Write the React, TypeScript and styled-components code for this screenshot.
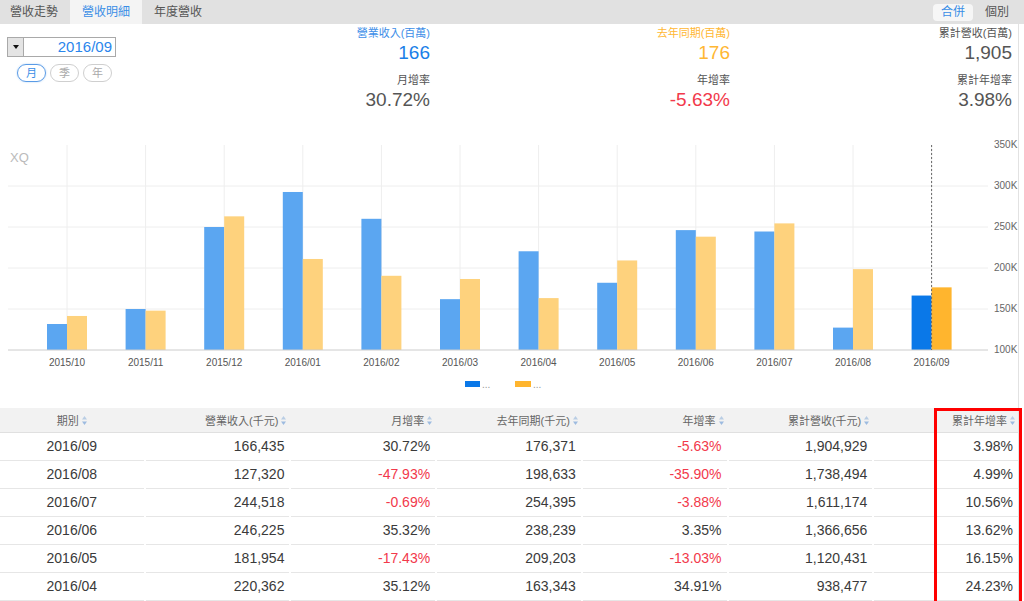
import React from 'react'
import styled, { createGlobalStyle } from 'styled-components'

const GlobalStyle = createGlobalStyle`
    html, body {
        margin: 0;
        padding: 0;
        background: #fff;
    }
    body {
        font-family: "Liberation Sans", Arial, "Noto Sans CJK TC", sans-serif;
        color: #333;
    }
`

const BLUE = '#1a7fe8'
const ORANGE = '#ffb733'
const RED = '#f2394b'

const Page = styled.div`
    width: 1024px;
    height: 601px;
    overflow: hidden;
`

const TabBar = styled.div`
    display: flex;
    justify-content: space-between;
    height: 24px;
    background: #e1e1e1;
`
const Tabs = styled.div`
    display: flex;
    margin-left: -2px;
`
const Tab = styled.div<{ $active?: boolean }>`
    padding: 0 12px;
    line-height: 24px;
    font-size: 12px;
    color: ${p => (p.$active ? '#3a8ee6' : '#555')};
    background: ${p => (p.$active ? '#f4f4f4' : 'transparent')};
`
const Scope = styled.div`
    display: flex;
    align-items: center;
    gap: 4px;
    padding-right: 7px;
`
const ScopeBtn = styled.div<{ $active?: boolean }>`
    font-size: 12px;
    line-height: 17px;
    padding: 0 8px;
    border-radius: 4px;
    background: ${p => (p.$active ? '#f6f6f6' : 'transparent')};
    color: ${p => (p.$active ? '#3a8ee6' : '#555')};
`

const Content = styled.div`
    width: 1019px;
    border-right: 1px solid #e2e2e2;
    box-sizing: border-box;
`

const Header = styled.div`
    display: grid;
    grid-template-columns: 130px 300px 300px 1fr;
    height: 96px;
    padding-right: 6px;
`
const PickerCol = styled.div`
    padding: 13px 0 0 7px;
`
const DateBox = styled.div`
    display: flex;
    width: 109px;
    height: 20px;
    border: 1px solid #a9a9a9;
    box-sizing: border-box;
`
const DropBtn = styled.div`
    width: 15px;
    background: #e4e4e4;
    border-right: 1px solid #a9a9a9;
    display: flex;
    align-items: center;
    justify-content: center;

    &::after {
        content: '';
        border-top: 4px solid #111;
        border-left: 3px solid transparent;
        border-right: 3px solid transparent;
    }
`
const DateText = styled.div`
    flex: 1;
    text-align: right;
    font-size: 15px;
    line-height: 18px;
    color: #2a86ec;
    padding-right: 3px;
`
const PeriodRow = styled.div`
    display: flex;
    gap: 4px;
    margin: 7px 0 0 10px;
`
const PeriodBtn = styled.div<{ $active?: boolean }>`
    width: 29px;
    height: 18px;
    box-sizing: border-box;
    border: 1px solid ${p => (p.$active ? '#5a9be6' : '#cfcfcf')};
    border-radius: 9px;
    font-size: 11px;
    line-height: 16px;
    text-align: center;
    color: ${p => (p.$active ? '#3a8ee6' : '#aaa')};
    box-shadow: ${p => (p.$active ? '0 0 2px rgba(58,142,230,0.4)' : 'none')};
`
const StatCol = styled.div`
    text-align: right;
    padding-top: 2px;
`
const StatLabel = styled.div<{ $color?: string; $gap?: boolean }>`
    font-size: 11px;
    line-height: 14px;
    color: ${p => p.$color || '#555'};
    margin-top: ${p => (p.$gap ? '7px' : '0')};
`
const StatValue = styled.div<{ $color?: string }>`
    font-size: 19px;
    line-height: 26px;
    color: ${p => p.$color || '#555'};
`

const ChartWrap = styled.div`
    height: 280px;
    svg {
        display: block;
    }
`

const TableWrap = styled.div`
    position: relative;
    margin-top: 8px;
`
const HeadRow = styled.div`
    display: grid;
    grid-template-columns: repeat(7, 1fr);
    column-gap: 2px;
    height: 25px;
    background: #f2f2f2;
    border-bottom: 1px solid #e0e0e0;
    box-sizing: border-box;
`
const HeadCell = styled.div<{ $center?: boolean }>`
    display: flex;
    align-items: center;
    justify-content: ${p => (p.$center ? 'center' : 'flex-end')};
    gap: 3px;
    padding-right: ${p => (p.$center ? '0' : '3px')};
    font-size: 11px;
    color: #666;
`
const Row = styled.div`
    display: grid;
    grid-template-columns: repeat(7, 1fr);
    column-gap: 2px;
    height: 28px;
`
const Cell = styled.div<{ $center?: boolean; $neg?: boolean }>`
    border-bottom: 1px solid #e6e6e6;
    text-align: ${p => (p.$center ? 'center' : 'right')};
    padding-right: ${p => (p.$center ? '0' : '5px')};
    font-size: 14px;
    line-height: 27px;
    color: ${p => (p.$neg ? RED : '#3a3a3a')};
`
const Highlight = styled.div`
    position: absolute;
    left: 934px;
    top: 0;
    width: 88px;
    height: 200px;
    border: 3px solid #f00;
    box-sizing: border-box;
    pointer-events: none;
`

const SortIcon = () => (
    <svg width="5" height="9" viewBox="0 0 5 9">
        <path d="M2.5 0 L5 3.5 L0 3.5 Z" fill="#b9cde4" />
        <path d="M2.5 9 L5 5.5 L0 5.5 Z" fill="#9dbbe0" />
    </svg>
)

const months = [
    { m: '2015/10', a: 131.7, b: 141.5 },
    { m: '2015/11', a: 150, b: 148 },
    { m: '2015/12', a: 250, b: 263 },
    { m: '2016/01', a: 292.7, b: 211 },
    { m: '2016/02', a: 260, b: 190.5 },
    { m: '2016/03', a: 162, b: 186.6 },
    { m: '2016/04', a: 220.4, b: 163.3 },
    { m: '2016/05', a: 182, b: 209.2 },
    { m: '2016/06', a: 246.2, b: 238.2 },
    { m: '2016/07', a: 244.5, b: 254.4 },
    { m: '2016/08', a: 127.3, b: 198.6 },
    { m: '2016/09', a: 166.4, b: 176.4 },
]

const yOf = (v: number) => 350 - (v - 100) * 0.82
const xOf = (i: number) => 67 + i * 78.6

const Chart = () => (
    <svg width="1019" height="280" viewBox="0 120 1019 280">
        {[186, 227, 268, 309].map(y => (
            <line key={y} x1="8" x2="988" y1={y} y2={y} stroke="#eeeeee" />
        ))}
        {months.map((d, i) => (
            <line key={d.m} x1={xOf(i)} x2={xOf(i)} y1="145" y2="350" stroke="#eeeeee" />
        ))}
        <text x="10" y="162" fontSize="13" fill="#bbb">XQ</text>
        {months.map((d, i) => {
            const last = i === months.length - 1
            const x = xOf(i)
            return (
                <g key={d.m}>
                    <rect x={x - 20} y={yOf(d.a)} width="20" height={350 - yOf(d.a)} fill={last ? '#0a78e8' : '#5ba6f1'} />
                    <rect x={x} y={yOf(d.b)} width="20" height={350 - yOf(d.b)} fill={last ? '#ffb52e' : '#fed27d'} />
                    <text x={x} y="366" fontSize="10" fill="#555" textAnchor="middle">{d.m}</text>
                </g>
            )
        })}
        <line x1="8" x2="988" y1="350" y2="350" stroke="#cccccc" />
        <line x1={xOf(11)} x2={xOf(11)} y1="145" y2="350" stroke="#666" strokeDasharray="2,2" />
        {['350K', '300K', '250K', '200K', '150K', '100K'].map((t, i) => (
            <text key={t} x="994" y={148 + i * 41} fontSize="10" fill="#666">{t}</text>
        ))}
        <rect x="465" y="381" width="15" height="6" fill="#0a78e8" />
        <text x="482" y="388" fontSize="10" fill="#999">...</text>
        <rect x="515" y="381" width="16" height="6" fill="#ffb52e" />
        <text x="533" y="388" fontSize="10" fill="#999">...</text>
    </svg>
)

const heads = ['期別', '營業收入(千元)', '月增率', '去年同期(千元)', '年增率', '累計營收(千元)', '累計年增率']

const rows = [
    ['2016/09', '166,435', '30.72%', '176,371', '-5.63%', '1,904,929', '3.98%'],
    ['2016/08', '127,320', '-47.93%', '198,633', '-35.90%', '1,738,494', '4.99%'],
    ['2016/07', '244,518', '-0.69%', '254,395', '-3.88%', '1,611,174', '10.56%'],
    ['2016/06', '246,225', '35.32%', '238,239', '3.35%', '1,366,656', '13.62%'],
    ['2016/05', '181,954', '-17.43%', '209,203', '-13.03%', '1,120,431', '16.15%'],
    ['2016/04', '220,362', '35.12%', '163,343', '34.91%', '938,477', '24.23%'],
]

const App: React.FC = () => (
    <Page>
        <GlobalStyle />
        <TabBar>
            <Tabs>
                <Tab>營收走勢</Tab>
                <Tab $active>營收明細</Tab>
                <Tab>年度營收</Tab>
            </Tabs>
            <Scope>
                <ScopeBtn $active>合併</ScopeBtn>
                <ScopeBtn>個別</ScopeBtn>
            </Scope>
        </TabBar>
        <Content>
            <Header>
                <PickerCol>
                    <DateBox>
                        <DropBtn />
                        <DateText>2016/09</DateText>
                    </DateBox>
                    <PeriodRow>
                        <PeriodBtn $active>月</PeriodBtn>
                        <PeriodBtn>季</PeriodBtn>
                        <PeriodBtn>年</PeriodBtn>
                    </PeriodRow>
                </PickerCol>
                <StatCol>
                    <StatLabel $color="#3d8ee8">營業收入(百萬)</StatLabel>
                    <StatValue $color={BLUE}>166</StatValue>
                    <StatLabel $gap>月增率</StatLabel>
                    <StatValue>30.72%</StatValue>
                </StatCol>
                <StatCol>
                    <StatLabel $color={ORANGE}>去年同期(百萬)</StatLabel>
                    <StatValue $color={ORANGE}>176</StatValue>
                    <StatLabel $gap>年增率</StatLabel>
                    <StatValue $color={RED}>-5.63%</StatValue>
                </StatCol>
                <StatCol>
                    <StatLabel>累計營收(百萬)</StatLabel>
                    <StatValue>1,905</StatValue>
                    <StatLabel $gap>累計年增率</StatLabel>
                    <StatValue>3.98%</StatValue>
                </StatCol>
            </Header>
            <ChartWrap>
                <Chart />
            </ChartWrap>
            <TableWrap>
                <HeadRow>
                    {heads.map((h, i) => (
                        <HeadCell key={h} $center={i === 0}>
                            {h}
                            <SortIcon />
                        </HeadCell>
                    ))}
                </HeadRow>
                {rows.map(r => (
                    <Row key={r[0]}>
                        {r.map((v, i) => (
                            <Cell key={i} $center={i === 0} $neg={v.startsWith('-')}>
                                {v}
                            </Cell>
                        ))}
                    </Row>
                ))}
                <Highlight />
            </TableWrap>
        </Content>
    </Page>
)

export default App
